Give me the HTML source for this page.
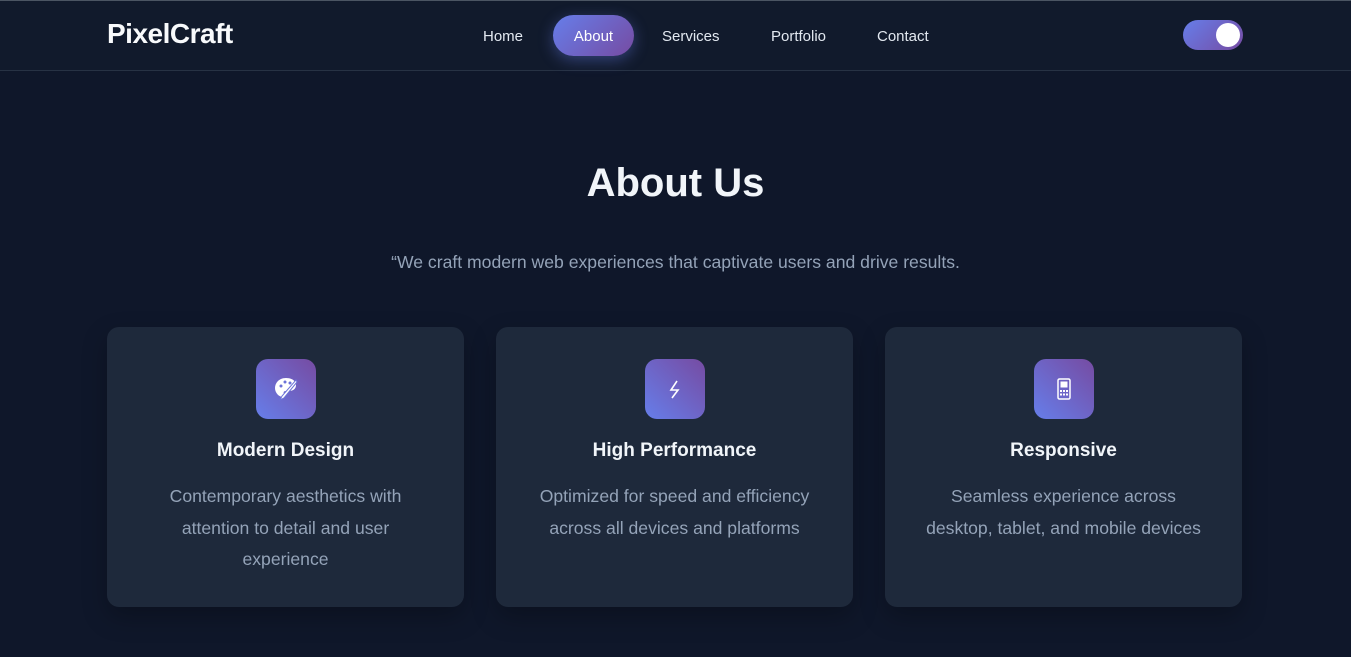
<!DOCTYPE html>
<html><head><style>
*{margin:0;padding:0;box-sizing:border-box}
body{width:1351px;height:657px;overflow:hidden;background:#0f172a;font-family:"Liberation Sans",sans-serif;color:#f1f5f9;border-top:1px solid #4b5563}
header{height:70px;border-bottom:1px solid #273244;background:#111a2c;position:relative}
.logo{position:absolute;left:107px;top:17px;font-size:28px;font-weight:bold;color:#f8fafc;letter-spacing:-0.5px}
nav{position:absolute;left:0;top:14px;width:100%;height:41px}
nav a{position:absolute;top:1px;height:41px;line-height:41px;font-size:15px;color:#e2e8f0;text-decoration:none}
nav a.act{top:0;height:41px;line-height:43px;background:linear-gradient(135deg,#667eea,#764ba2);border-radius:21px;width:81px;text-align:center;color:#fff;box-shadow:0 4px 15px rgba(102,126,234,.4)}
.tog{position:absolute;left:1183px;top:19px;width:60px;height:30px;border-radius:15px;background:linear-gradient(135deg,#667eea,#764ba2)}
.tog i{position:absolute;right:3px;top:3px;width:24px;height:24px;border-radius:50%;background:#fff}
h1{position:absolute;top:161px;width:100%;text-align:center;font-size:40px;font-weight:bold;color:#f1f5f9}
.sub{position:absolute;top:252px;width:100%;text-align:center;font-size:17.6px;color:#94a3b8}
.card{position:absolute;top:327px;width:357px;height:280px;background:#1e293b;border-radius:12px;text-align:center;padding:32px 36px;box-shadow:0 10px 25px rgba(0,0,0,.25)}
.ic{width:60px;height:60px;margin:0 auto;border-radius:12px;background:linear-gradient(45deg,#667eea,#764ba2);display:flex;align-items:center;justify-content:center}
.card h3{font-size:19px;margin-top:21px;color:#f1f5f9;line-height:22px}
.card p{margin-top:19px;font-size:17.6px;line-height:31.5px;color:#94a3b8}
</style></head><body>
<header>
<div class="logo">PixelCraft</div>
<nav>
<a style="left:483px">Home</a>
<a class="act" style="left:553px">About</a>
<a style="left:662px">Services</a>
<a style="left:771px">Portfolio</a>
<a style="left:877px">Contact</a>
</nav>
<div class="tog"><i></i></div>
</header>
<h1>About Us</h1>
<div class="sub">“We craft modern web experiences that captivate users and drive results.</div>
<div class="card" style="left:107px"><div class="ic"><svg width="26" height="26" viewBox="0 0 26 26"><path d="M13 2C6 2 2 7 2 12c0 5 4 9 8 9 2 0 2-2 1-3-1-2 0-3 2-3h3c4 0 7-2 7-6 0-4-4-7-10-7z" fill="#fff"/><circle cx="8" cy="10" r="1.5" fill="#6b72d8"/><circle cx="12" cy="6" r="1.5" fill="#6b72d8"/><circle cx="17" cy="7" r="1.5" fill="#6b72d8"/><path d="M23 4L9 20l-2 4 4-2L24 6z" fill="#fff" stroke="#6b72d8" stroke-width="1"/></svg></div><h3>Modern Design</h3><p>Contemporary aesthetics with attention to detail and user experience</p></div>
<div class="card" style="left:496px"><div class="ic"><svg width="20" height="22" viewBox="0 0 20 22"><path d="M12 3L6 12h7l-6 8" fill="none" stroke="#fff" stroke-width="1.6"/></svg></div><h3>High Performance</h3><p>Optimized for speed and efficiency across all devices and platforms</p></div>
<div class="card" style="left:885px"><div class="ic"><svg width="14" height="22" viewBox="0 0 14 22"><rect x="1" y="1" width="12" height="20" rx="1.5" fill="none" stroke="#fff" stroke-width="1.5"/><rect x="3.5" y="3.5" width="7" height="6" fill="#fff"/><g fill="#fff"><rect x="3" y="12" width="2" height="2"/><rect x="6" y="12" width="2" height="2"/><rect x="9" y="12" width="2" height="2"/><rect x="3" y="15.5" width="2" height="2"/><rect x="6" y="15.5" width="2" height="2"/><rect x="9" y="15.5" width="2" height="2"/></g></svg></div><h3>Responsive</h3><p>Seamless experience across desktop, tablet, and mobile devices</p></div>
</body></html>
